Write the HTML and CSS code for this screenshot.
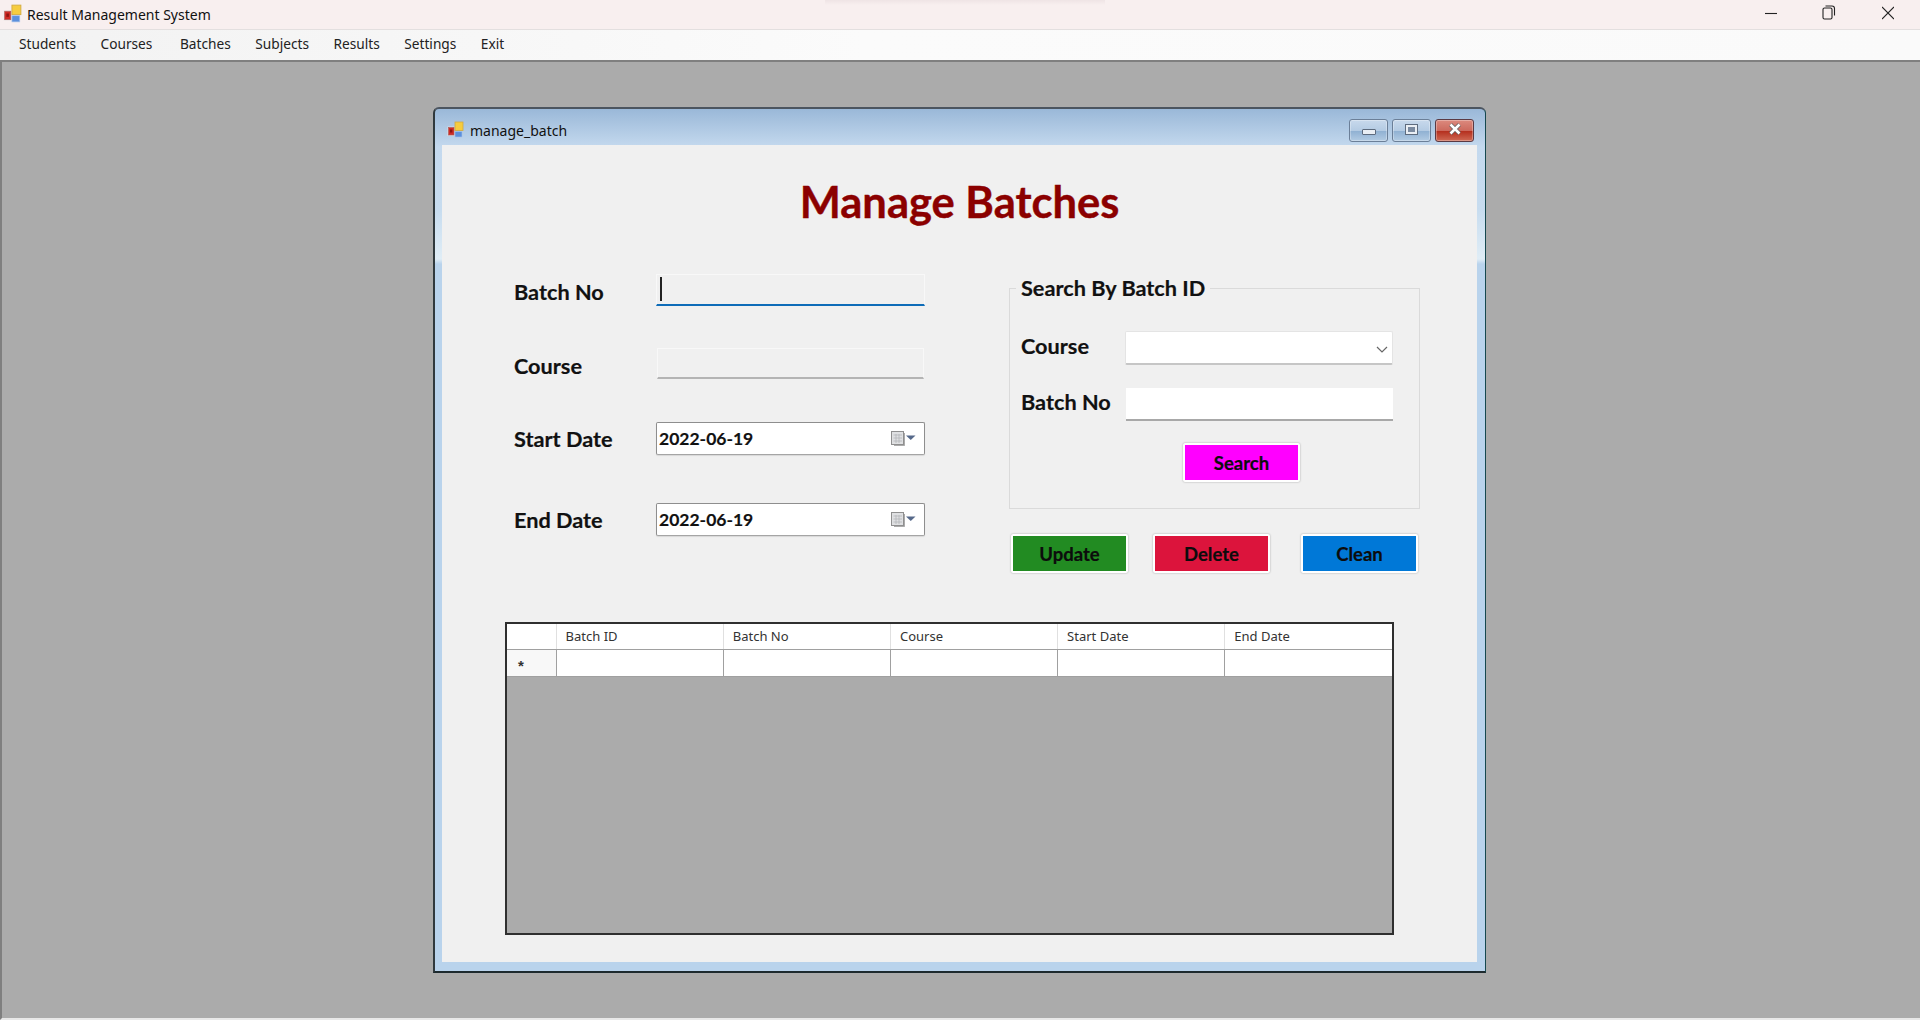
FILE: index.html
```html
<!DOCTYPE html>
<html lang="en">
<head>
<meta charset="utf-8">
<title>Result Management System</title>
<link rel="stylesheet" href="styles.css">
</head>
<body>
<svg class="defs" width="0" height="0" aria-hidden="true">
  <symbol id="appicon" viewBox="0 0 17 17">
    <rect x="0.500" y="5.500" width="7" height="9.500" fill="#eceaea" opacity=".7"/>
    <rect x="1.500" y="6.500" width="5.500" height="7.500" fill="#d02a24" stroke="#b0605c" stroke-width=".7"/>
    <rect x="3" y="8.500" width="2.300" height="3" fill="#8e1512"/>
    <rect x="8" y="1" width="8" height="8.500" fill="#f6cc3e" stroke="#d2aa40" stroke-width=".8"/>
    <rect x="8" y="10.500" width="7" height="5.500" fill="#5c90dc" stroke="#a8c4ea" stroke-width=".6"/>
  </symbol>
  <symbol id="calendar" viewBox="0 0 26 15">
    <rect x="0.500" y="0.500" width="12" height="13" fill="#dfe0e2" stroke="#8f8f8f"/>
    <path d="M2.500 4h8.500M2.500 7h8.500M2.500 10h8.500M5 3v9M8 3v9" stroke="#b4b6ba" stroke-width=".8" fill="none"/>
    <path d="M13.500 2v12.500H3" stroke="#666" stroke-width="1" fill="none" opacity=".55"/>
    <path d="M15 4.500h9.500l-4.750 4.600z" fill="#56698a"/>
  </symbol>
</svg>

<div class="app">
  <header class="titlebar">
    <svg class="app-icon"><use href="#appicon"/></svg>
    <span class="app-title">Result Management System</span>
    <div class="win-controls">
      <svg class="win-btn win-btn-min" viewBox="0 0 57 20"><path d="M0 10.500h12" stroke="#222" stroke-width="1.100"/></svg>
      <svg class="win-btn win-btn-max" viewBox="0 0 60 20"><path d="M1 6.500a1.500 1.500 0 0 1 1.500-1.500h6a1.500 1.500 0 0 1 1.500 1.500v8a1.500 1.500 0 0 1-1.500 1.500h-6A1.500 1.500 0 0 1 1 14.500z M3.500 3h6.500a2.500 2.500 0 0 1 2.500 2.500v7" stroke="#222" stroke-width="1.100" fill="none"/></svg>
      <svg class="win-btn win-btn-close" viewBox="0 0 12 20"><path d="M0 4l12 12M12 4L0 16" stroke="#222" stroke-width="1.100"/></svg>
    </div>
  </header>

  <nav class="menubar">
    <span class="menu-item">Students</span>
    <span class="menu-item">Courses</span>
    <span class="menu-item menu-item-wide">Batches</span>
    <span class="menu-item">Subjects</span>
    <span class="menu-item">Results</span>
    <span class="menu-item">Settings</span>
    <span class="menu-item">Exit</span>
  </nav>

  <main class="mdi">
    <section class="child">
      <div class="child-bar">
        <svg class="child-icon"><use href="#appicon"/></svg>
        <span class="child-title">manage_batch</span>
        <div class="aero-controls">
          <div class="aero aero-min"><span class="glyph-min"></span></div>
          <div class="aero aero-max"><span class="glyph-max"></span></div>
          <div class="aero aero-close">
            <svg class="glyph-close" viewBox="0 0 14 12"><path d="M2.500 1.500l9 9M11.500 1.500l-9 9" stroke="#5d5d5d" stroke-width="4"/><path d="M2.500 1.500l9 9M11.500 1.500l-9 9" stroke="#fff" stroke-width="2.600"/></svg>
          </div>
        </div>
      </div>

      <div class="client">
        <h1 class="heading">Manage Batches</h1>

        <div class="form-area">
          <div class="fields">
            <label class="label label-low">Batch No</label>
            <div class="textbox textbox-focus"><span class="caret"></span></div>
            <label class="label label-low">Course</label>
            <div class="textbox textbox-flat"></div>
            <label class="label">Start Date</label>
            <div class="datebox"><span>2022-06-19</span><svg class="cal"><use href="#calendar"/></svg></div>
            <label class="label">End Date</label>
            <div class="datebox"><span>2022-06-19</span><svg class="cal"><use href="#calendar"/></svg></div>
          </div>

          <div class="side">
            <div class="group">
              <div class="legend">Search By Batch ID</div>
              <div class="group-grid">
                <label class="label label-high">Course</label>
                <div class="combo">
                  <svg class="chev" viewBox="0 0 12 7"><path d="M1 1l5 5 5-5" stroke="#666" stroke-width="1.200" fill="none"/></svg>
                </div>
                <label class="label label-high">Batch No</label>
                <div class="search-input"></div>
              </div>
              <button class="btn btn-search">Search</button>
            </div>
            <div class="actions">
              <button class="btn btn-update">Update</button>
              <button class="btn btn-delete">Delete</button>
              <button class="btn btn-clean">Clean</button>
            </div>
          </div>
        </div>

        <div class="datagrid">
          <table class="dg-table">
            <thead>
              <tr><th class="dg-corner"></th><th>Batch ID</th><th>Batch No</th><th>Course</th><th>Start Date</th><th>End Date</th></tr>
            </thead>
            <tbody>
              <tr><td class="dg-rowhead">*</td><td></td><td></td><td></td><td></td><td></td></tr>
            </tbody>
          </table>
        </div>
      </div>
    </section>
  </main>
</div>
</body>
</html>
```

FILE: styles.css
```css
* { box-sizing: border-box; }
html, body { margin: 0; padding: 0; height: 100%; overflow: hidden; }
body { font-family: "Noto Sans", "Open Sans", sans-serif; color: #111; background: #f0f0f0; }
.defs { position: absolute; }

.app { display: flex; flex-direction: column; height: 1020px; }

.titlebar {
  height: 30px; flex: none; display: flex; align-items: center;
  padding-left: 3px; border-bottom: 1px solid #e3dfdf;
  background: linear-gradient(180deg, #efe4e5, #f8efef 5px) 825px 0 / 280px 30px no-repeat, #f8efef;
}
.app-icon { width: 19px; height: 19px; margin-top: -2px; }
.app-title { margin-left: 5px; font-size: 14px; line-height: 20px; color: #111; }
.win-controls { margin-left: auto; padding-right: 26px; display: flex; margin-top: -3px; }
.win-btn { height: 20px; display: block; }
.win-btn-min { width: 57px; }
.win-btn-max { width: 60px; }
.win-btn-close { width: 12px; }

.menubar {
  height: 30px; flex: none; display: flex; align-items: center; gap: 24.500px;
  padding: 0 0 4px 19px;
  background: linear-gradient(90deg, #f2f2f2, #fbfbfb 45%, #fafafa);
  font-size: 13.700px; color: #222;
}
.menu-item-wide { margin-left: 3px; }

.mdi {
  flex: 1; position: relative; background: #ababab;
  border-top: 2px solid #7f7f7f; border-left: 2px solid #7f7f7f;
  border-bottom: 2px solid #e8e8e8;
}

.child {
  position: absolute; left: 431px; top: 45px; width: 1053px; height: 866px;
  display: flex; flex-direction: column;
  padding: 0 8px 9px 7px;
  border: 1px solid #30393d; border-left-width: 2px; border-top: 2px solid #4c5560; border-radius: 6px 6px 0 0;
  border-right-color: #15484f;
  border-bottom: 2px solid #1d2a2e;
  background: linear-gradient(180deg, #9ab8d8 0, #c4d9ee 38px, #c7dcef 100px, #e0edf6 150px, #b9d3ec 155px, #b9d3ec 100%);
}
.child-bar {
  height: 36px; flex: none; display: flex; align-items: center;
  padding: 6px 0 0 5px;
}
.child-icon { width: 17px; height: 17px; margin-top: -2px; }
.child-title { margin-left: 6px; font-size: 14px; color: #111; }
.aero-controls { margin-left: auto; display: flex; gap: 4px; margin-right: 3px; margin-top: 0; }
.aero {
  width: 39px; height: 23px; border: 1px solid #6b7f98; border-radius: 3px;
  display: flex; align-items: center; justify-content: center;
  background: linear-gradient(180deg, #c8d9ec 0, #b4cbe3 50%, #8fb0d2 52%, #b2cbe3 100%);
  box-shadow: inset 0 0 0 1px rgba(255,255,255,.3);
}
.aero-close {
  border-color: #5a3a44;
  background: linear-gradient(180deg, #dc8a7e 0, #cc6a5e 50%, #b5301f 54%, #cf6a55 100%);
}
.glyph-min { width: 14px; height: 6px; margin-top: 4px; background: #e9eef4; border: 1px solid #5d6b7e; border-radius: 1px; }
.glyph-max { width: 13px; height: 11px; background: #e9eef4; border: 1px solid #5d6b7e; position: relative; margin-top: -1px; }
.glyph-max::after { content: ""; position: absolute; left: 2px; right: 2px; top: 2px; bottom: 2px; background: #7a8aa0; }
.glyph-close { width: 14px; height: 12px; display: block; margin-top: -2px; }

.client {
  flex: 1; background: #f0f0f0; padding: 32px 0 0 0;
}
.heading {
  margin: 0; text-align: center; height: 50px; line-height: 48px;
  font-family: Lato, "Open Sans", sans-serif; font-weight: 700; font-size: 43.500px;
  -webkit-text-stroke: 0.4px #8b0000;
  color: #8b0000;
}

.form-area { display: flex; margin: 47px 0 0 72px; align-items: flex-start; }

.label {
  font-family: Lato, "Open Sans", sans-serif; font-weight: 700; font-size: 21.700px; color: #111;
  -webkit-text-stroke: 0.2px #111;
}

.fields {
  width: 411px; display: grid; grid-template-columns: 142px 269px;
  grid-template-rows: 32px 42px 31px 43px 33px 48px 33px; align-items: center;
}
.fields > :nth-child(1), .fields > :nth-child(2) { grid-row: 1; }
.fields > :nth-child(3), .fields > :nth-child(4) { grid-row: 3; }
.fields > :nth-child(5), .fields > :nth-child(6) { grid-row: 5; }
.fields > :nth-child(7), .fields > :nth-child(8) { grid-row: 7; }
.label-low { padding-top: 4px; }
.label-high { margin-top: -5px; }

.textbox { height: 100%; background: #f0f0f0; position: relative; border: 1px solid #f8f8f8; }
.textbox-focus { border-bottom: 2px solid #0e6cb8; }
.textbox-flat { border-bottom: 2px solid #b4b4b4; margin: 0 1px; }
.caret { position: absolute; left: 3px; top: 2px; width: 2px; height: 24px; background: #222; }

.datebox {
  height: 100%; background: #fff; border: 1px solid #8e8e8e; border-radius: 2px;
  border-bottom-color: #a5a5a5; box-shadow: 0 1px 1px rgba(0,0,0,.1);
  display: flex; align-items: center; padding-left: 2px; position: relative;
  font-family: Lato, "Open Sans", sans-serif; font-weight: 700; font-size: 17.500px; color: #111;
  -webkit-text-stroke: 0.15px #111;
}
.cal { position: absolute; left: 234px; top: 8px; width: 26px; height: 15px; }

.side { margin-left: 84px; width: 411px; margin-top: 14px; }
.group {
  height: 221px; border: 1px solid #dadada; padding: 0 0 0 11px; position: relative;
  display: flex; flex-direction: column;
}
.legend {
  position: absolute; top: -15px; left: 6px; padding: 0 5px; background: #f0f0f0;
  font-family: Lato, "Open Sans", sans-serif; font-weight: 700; font-size: 21.700px; line-height: 28px; color: #111;
  -webkit-text-stroke: 0.2px #111;
}
.group-grid {
  margin-top: 42px; display: grid; grid-template-columns: 105px 267px;
  grid-template-rows: 34px 33px; row-gap: 23px; align-items: center;
}
.combo {
  height: 34px; background: #fff; border: 1px solid #e4e4e4; border-bottom: 2px solid #c6c6c6; border-radius: 2px;
  position: relative; margin-left: -1px;
}
.chev { position: absolute; right: 4px; top: 14px; width: 12px; height: 7px; }
.search-input { height: 33px; background: #fff; border-bottom: 2px solid #a8a8a8; }

.btn {
  width: 117px; height: 39px; padding: 0; border: 2px solid #fff; border-radius: 2px;
  box-shadow: 0 0 2px rgba(0,0,0,.35);
  font-family: Lato, "Open Sans", sans-serif; font-weight: 700; font-size: 18.500px; color: #0c0c0c;
  -webkit-text-stroke: 0.2px #0c0c0c;
}
.btn-search { background: #ff00ff; margin: 22px 0 0 162px; }
.btn-update { background: #228b22; margin-left: 2px; }
.btn-delete { background: #dc143c; margin-left: 25px; }
.btn-clean { background: #0078d7; margin-left: 31px; }
.actions { display: flex; margin-top: 25px; }

.datagrid {
  margin: 49px 0 0 63px; width: 889px; height: 313px;
  background: #ababab; border: 2px solid #2f2f2f;
}
.dg-table {
  border-collapse: collapse; table-layout: fixed; width: 885px;
  font-size: 13px; color: #333;
}
.dg-table th {
  width: 167px; height: 25px; background: #fff; text-align: left; font-weight: 400;
  padding: 0 0 1px 9px; border-right: 1px solid #e0e0e0; border-bottom: 1px solid #a0a0a0;
}
.dg-table th.dg-corner { width: 49px; padding: 0; }
.dg-table th:last-child, .dg-table td:last-child { border-right: 0; }
.dg-table td {
  height: 27px; background: #fff; border-right: 1px solid #a0a0a0; border-bottom: 1px solid #a0a0a0; padding: 0;
}
.dg-table td.dg-rowhead {
  background: #f8f8f8; text-align: left; padding: 6px 0 0 11px;
  font-family: "Liberation Sans", sans-serif; font-size: 15px; font-weight: 700; line-height: 16px; color: #333;
}
```
